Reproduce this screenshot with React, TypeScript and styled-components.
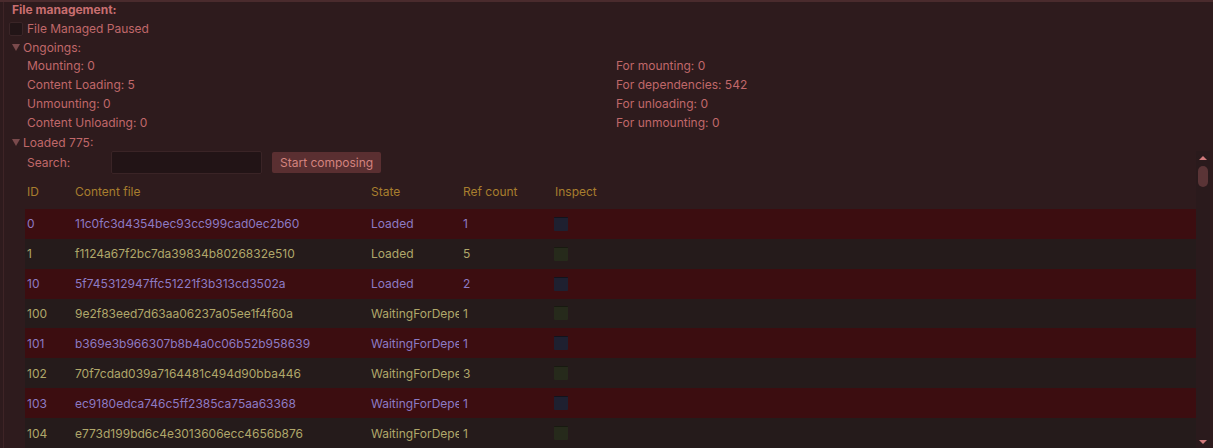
import React from "react";
import styled, { createGlobalStyle } from "styled-components";

const Global = createGlobalStyle`
  html, body { margin: 0; padding: 0; background: #2e1b1d; }
  body { font-family: Inter, "Noto Sans", sans-serif; font-size: 12px; }
`;

const Page = styled.div`
  position: relative;
  width: 1213px;
  height: 448px;
  overflow: hidden;
  background: #2e1b1d;
  border-top: 2px solid #4a2b2d;
  box-sizing: border-box;
  color: #c0686a;
`;

const LeftRule = styled.div`
  position: absolute;
  left: 3px;
  top: 0;
  bottom: 0;
  width: 1px;
  background: #3e2426;
`;

const Content = styled.div`
  margin-top: -2px;
  padding-left: 12px;
  display: flex;
  flex-direction: column;
`;

const Title = styled.div`
  height: 18px;
  padding-top: 1px;
  line-height: 18px;
  font-weight: 700;
  color: #c86e70;
`;

const Line = styled.div<{ $h?: number; $top?: number }>`
  height: ${(p) => p.$h ?? 19}px;
  margin-top: ${(p) => p.$top ?? 0}px;
  display: flex;
  align-items: center;
  white-space: nowrap;
`;

const Check = styled.span`
  width: 12px;
  height: 12px;
  margin-left: -3px;
  margin-right: 4px;
  background: #221517;
  border: 1px solid #3a2527;
  border-radius: 2px;
`;

const Caret = styled.span`
  width: 0;
  height: 0;
  border-left: 4px solid transparent;
  border-right: 4px solid transparent;
  border-top: 7px solid #7a4a4c;
  margin-right: 3px;
`;

const Stats = styled.div`
  display: grid;
  grid-template-columns: 589px 1fr;
  padding-left: 15px;
`;

const StatCol = styled.div`
  display: flex;
  flex-direction: column;
`;

const Stat = styled.div`
  height: 19px;
  line-height: 19px;
`;

const ScrollArea = styled.div`
  display: flex;
  margin-left: 13px;
  height: 297px;
`;

const Inner = styled.div`
  width: 1171px;
  display: flex;
  flex-direction: column;
`;

const SearchRow = styled.div`
  height: 24px;
  display: flex;
  align-items: center;
  padding-left: 2px;
`;

const SearchLabel = styled.span`
  width: 84px;
`;

const Input = styled.div`
  width: 151px;
  height: 23px;
  box-sizing: border-box;
  background: #221416;
  border: 1px solid #3a2426;
  border-radius: 2px;
  margin-right: 10px;
`;

const Button = styled.div`
  height: 21px;
  box-sizing: border-box;
  padding: 0 8px;
  display: flex;
  align-items: center;
  background: #5a2f31;
  color: #d4837f;
  border-radius: 2px;
  font-size: 12px;
`;

const Grid = styled.div`
  display: grid;
  grid-template-columns: 48px 296px 92px 92px 1fr;
`;

const Header = styled(Grid)`
  height: 34px;
  align-items: center;
  color: #a87e2e;
`;

const Row = styled(Grid)<{ $odd: boolean }>`
  height: 30px;
  align-items: center;
  background: ${(p) => (p.$odd ? "#3c0d10" : "#251b1b")};
  color: ${(p) => (p.$odd ? "#8c7bc4" : "#b0a76a")};
`;

const Cell = styled.span`
  padding-left: 2px;
  margin-right: 2px;
  white-space: nowrap;
  overflow: hidden;
`;

const InspectBox = styled.span<{ $odd: boolean }>`
  display: block;
  width: 14px;
  height: 14px;
  margin-left: -1px;
  border-radius: 1px;
  background: ${(p) => (p.$odd ? "#1e2030" : "#262a1b")};
  border-top: 1px solid ${(p) => (p.$odd ? "#12131c" : "#181a10")};
  box-sizing: border-box;
`;

const ScrollBar = styled.div`
  width: 14px;
  background: #2a1a1c;
  display: flex;
  flex-direction: column;
  align-items: center;
  position: relative;
`;

const ArrowUp = styled.span`
  margin-top: 5px;
  border-left: 4px solid transparent;
  border-right: 4px solid transparent;
  border-bottom: 4px solid #d07a7c;
`;

const Thumb = styled.span`
  margin-top: 6px;
  width: 10px;
  height: 21px;
  border-radius: 5px;
  background: #5a3436;
`;

const ArrowDown = styled.span`
  position: absolute;
  bottom: 4px;
  border-left: 4px solid transparent;
  border-right: 4px solid transparent;
  border-top: 4px solid #d07a7c;
`;

const rows: [string, string, string, string][] = [
  ["0", "11c0fc3d4354bec93cc999cad0ec2b60", "Loaded", "1"],
  ["1", "f1124a67f2bc7da39834b8026832e510", "Loaded", "5"],
  ["10", "5f745312947ffc51221f3b313cd3502a", "Loaded", "2"],
  ["100", "9e2f83eed7d63aa06237a05ee1f4f60a", "WaitingForDependencies", "1"],
  ["101", "b369e3b966307b8b4a0c06b52b958639", "WaitingForDependencies", "1"],
  ["102", "70f7cdad039a7164481c494d90bba446", "WaitingForDependencies", "3"],
  ["103", "ec9180edca746c5ff2385ca75aa63368", "WaitingForDependencies", "1"],
  ["104", "e773d199bd6c4e3013606ecc4656b876", "WaitingForDependencies", "1"],
];

export default function App() {
  return (
    <Page>
      <Global />
      <LeftRule />
      <Content>
        <Title>File management:</Title>
        <Line>
          <Check />
          File Managed Paused
        </Line>
        <Line $h={18}>
          <Caret />
          Ongoings:
        </Line>
        <Stats>
          <StatCol>
            <Stat>Mounting: 0</Stat>
            <Stat>Content Loading: 5</Stat>
            <Stat>Unmounting: 0</Stat>
            <Stat>Content Unloading: 0</Stat>
          </StatCol>
          <StatCol>
            <Stat>For mounting: 0</Stat>
            <Stat>For dependencies: 542</Stat>
            <Stat>For unloading: 0</Stat>
            <Stat>For unmounting: 0</Stat>
          </StatCol>
        </Stats>
        <Line $top={1} $h={18}>
          <Caret />
          Loaded 775:
        </Line>
        <ScrollArea>
          <Inner>
            <SearchRow>
              <SearchLabel>Search:</SearchLabel>
              <Input />
              <Button>Start composing</Button>
            </SearchRow>
            <Header>
              <Cell>ID</Cell>
              <Cell>Content file</Cell>
              <Cell>State</Cell>
              <Cell>Ref count</Cell>
              <Cell>Inspect</Cell>
            </Header>
            {rows.map((r, i) => (
              <Row key={r[0]} $odd={i % 2 === 0}>
                <Cell>{r[0]}</Cell>
                <Cell>{r[1]}</Cell>
                <Cell>{r[2]}</Cell>
                <Cell>{r[3]}</Cell>
                <Cell>
                  <InspectBox $odd={i % 2 === 0} />
                </Cell>
              </Row>
            ))}
          </Inner>
          <ScrollBar>
            <ArrowUp />
            <Thumb />
            <ArrowDown />
          </ScrollBar>
        </ScrollArea>
      </Content>
    </Page>
  );
}
